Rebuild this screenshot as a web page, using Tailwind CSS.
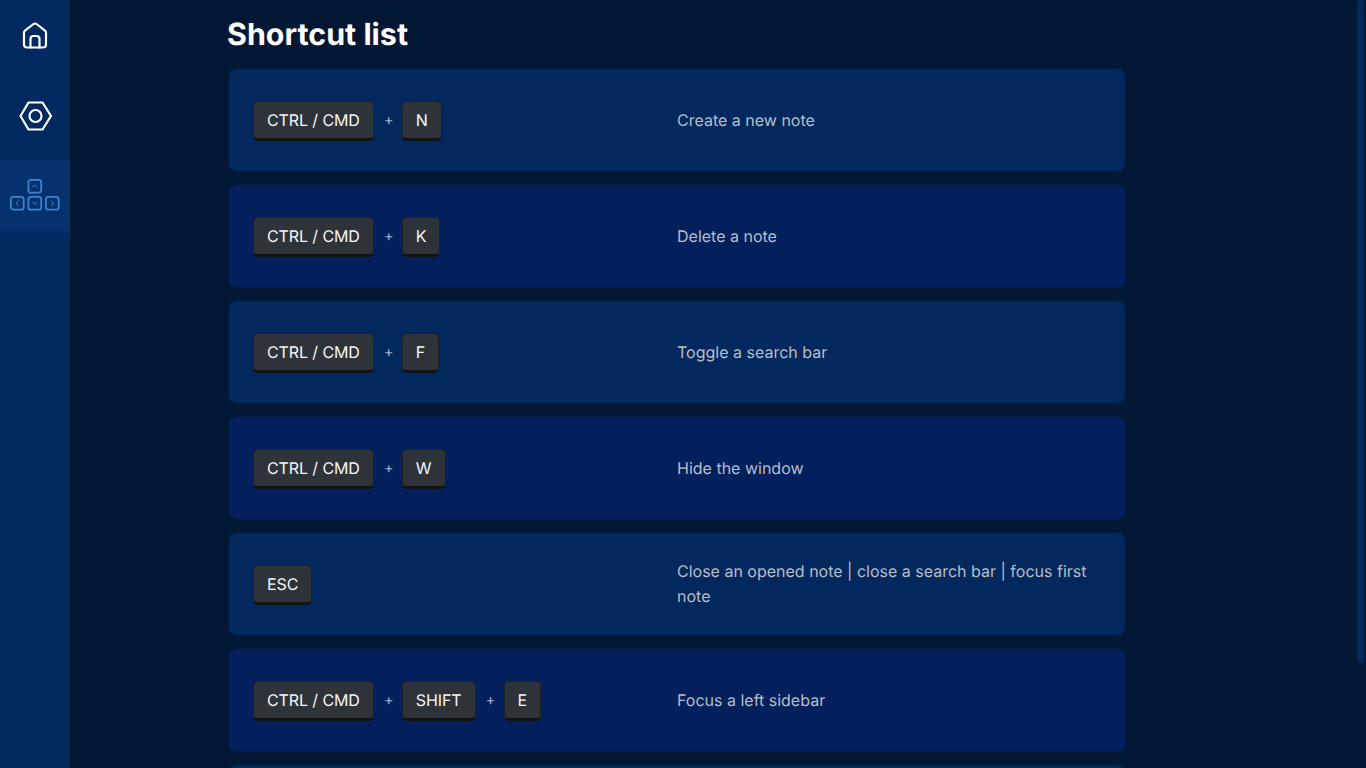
<!DOCTYPE html>
<html lang="en">
<head>
    <meta charset="UTF-8">
    <meta name="viewport" content="width=device-width, initial-scale=1.0">
    <title>Shortcut list</title>
    <script src="https://cdn.jsdelivr.net/npm/@tailwindcss/browser@4"></script>
</head>
<body class="h-screen overflow-hidden bg-[#021733] text-white font-['Inter',sans-serif] antialiased [text-rendering:geometricPrecision]">
    <div class="relative flex h-[768px]">
        <!-- Sidebar -->
        <nav class="flex w-[70px] shrink-0 flex-col items-center bg-[#032a60]">
            <a class="flex h-[71px] w-full items-center justify-center">
                <svg width="26" height="27" viewBox="0 0 26 27" fill="none" stroke="#fff" stroke-width="2.2" stroke-linejoin="round" stroke-linecap="round">
                    <path d="M2 10.5 Q2 9.5 3 8.7 L11.5 2 Q13 1 14.5 2 L23 8.7 Q24 9.5 24 10.5 V22.5 A3 3 0 0 1 21 25.5 H5 A3 3 0 0 1 2 22.5 Z"/>
                    <path d="M8.5 25.5 V17 A3 3 0 0 1 11.5 14 H14.5 A3 3 0 0 1 17.5 17 V25.5"/>
                </svg>
            </a>
            <a class="flex h-[89px] w-full items-center justify-center">
                <svg width="34" height="30" viewBox="0 0 34 30" fill="none" stroke="#fff" stroke-width="2.2" stroke-linejoin="round">
                    <path d="M10.5 1.5 H24.5 L33 15 L24.5 28.5 H10.5 L2.5 15 Z"/>
                    <circle cx="17.5" cy="15" r="6"/>
                </svg>
            </a>
            <a class="flex h-[71px] w-full items-center justify-center bg-[#05326c]">
                <svg width="52" height="33" viewBox="0 0 52 33" fill="none" stroke="#3a83cf" stroke-width="1.8">
                    <rect x="19.4" y="0.9" width="12.8" height="12.8" rx="2.5"/>
                    <rect x="1.9" y="17.9" width="12.8" height="12.8" rx="2.5"/>
                    <rect x="19.4" y="17.9" width="12.8" height="12.8" rx="2.5"/>
                    <rect x="36.9" y="17.9" width="12.8" height="12.8" rx="2.5"/>
                    <path stroke-width="1" d="M23.5 8.5 L25.8 6 L28.1 8.5 M9.8 21.8 L7 24.3 L9.8 26.8 M23.5 22.8 L25.8 25.3 L28.1 22.8 M42 21.8 L44.8 24.3 L42 26.8"/>
                </svg>
            </a>
        </nav>

        <!-- Content -->
        <main class="ml-[157px] w-[899px] shrink-0">
            <h1 class="h-[68px] pt-[15px] text-[30.4px] leading-[40px] font-bold">Shortcut list</h1>
            <div class="flex flex-col gap-[12px] pl-[1px]">
                <div class="flex h-[104px] items-center rounded-lg border border-[#021a3d] bg-[#03285e] pl-[24px]">
                    <div class="flex w-[424px] shrink-0 items-center pt-[2px]">
                        <kbd class="rounded-[5px] border border-[#1d2025] border-b-[3px] border-b-[#111317] bg-[#2e333a] px-[13px] py-[7px] font-['Inter',sans-serif] text-[16px] leading-[22px] tracking-[-0.1px] text-[#f5f6f7]">CTRL / CMD</kbd>
                        <span class="mx-[10px] -mt-[2px] w-[8px] text-center text-[15px] text-[#9fb0c8]">+</span>
                        <kbd class="rounded-[5px] border border-[#1d2025] border-b-[3px] border-b-[#111317] bg-[#2e333a] px-[13px] py-[7px] font-['Inter',sans-serif] text-[16px] leading-[22px] tracking-[-0.1px] text-[#f5f6f7]">N</kbd>
                    </div>
                    <p class="w-[424px] text-[16px] leading-[25px] text-[#b8bdc9]">Create a new note</p>
                </div>
                <div class="flex h-[104px] items-center rounded-lg border border-[#021a3d] bg-[#031f5c] pl-[24px]">
                    <div class="flex w-[424px] shrink-0 items-center pt-[2px]">
                        <kbd class="rounded-[5px] border border-[#1d2025] border-b-[3px] border-b-[#111317] bg-[#2e333a] px-[13px] py-[7px] font-['Inter',sans-serif] text-[16px] leading-[22px] tracking-[-0.1px] text-[#f5f6f7]">CTRL / CMD</kbd>
                        <span class="mx-[10px] -mt-[2px] w-[8px] text-center text-[15px] text-[#9fb0c8]">+</span>
                        <kbd class="rounded-[5px] border border-[#1d2025] border-b-[3px] border-b-[#111317] bg-[#2e333a] px-[13px] py-[7px] font-['Inter',sans-serif] text-[16px] leading-[22px] tracking-[-0.1px] text-[#f5f6f7]">K</kbd>
                    </div>
                    <p class="w-[424px] text-[16px] leading-[25px] text-[#b8bdc9]">Delete a note</p>
                </div>
                <div class="flex h-[104px] items-center rounded-lg border border-[#021a3d] bg-[#03285e] pl-[24px]">
                    <div class="flex w-[424px] shrink-0 items-center pt-[2px]">
                        <kbd class="rounded-[5px] border border-[#1d2025] border-b-[3px] border-b-[#111317] bg-[#2e333a] px-[13px] py-[7px] font-['Inter',sans-serif] text-[16px] leading-[22px] tracking-[-0.1px] text-[#f5f6f7]">CTRL / CMD</kbd>
                        <span class="mx-[10px] -mt-[2px] w-[8px] text-center text-[15px] text-[#9fb0c8]">+</span>
                        <kbd class="rounded-[5px] border border-[#1d2025] border-b-[3px] border-b-[#111317] bg-[#2e333a] px-[13px] py-[7px] font-['Inter',sans-serif] text-[16px] leading-[22px] tracking-[-0.1px] text-[#f5f6f7]">F</kbd>
                    </div>
                    <p class="w-[424px] text-[16px] leading-[25px] text-[#b8bdc9]">Toggle a search bar</p>
                </div>
                <div class="flex h-[104px] items-center rounded-lg border border-[#021a3d] bg-[#031f5c] pl-[24px]">
                    <div class="flex w-[424px] shrink-0 items-center pt-[2px]">
                        <kbd class="rounded-[5px] border border-[#1d2025] border-b-[3px] border-b-[#111317] bg-[#2e333a] px-[13px] py-[7px] font-['Inter',sans-serif] text-[16px] leading-[22px] tracking-[-0.1px] text-[#f5f6f7]">CTRL / CMD</kbd>
                        <span class="mx-[10px] -mt-[2px] w-[8px] text-center text-[15px] text-[#9fb0c8]">+</span>
                        <kbd class="rounded-[5px] border border-[#1d2025] border-b-[3px] border-b-[#111317] bg-[#2e333a] px-[13px] py-[7px] font-['Inter',sans-serif] text-[16px] leading-[22px] tracking-[-0.1px] text-[#f5f6f7]">W</kbd>
                    </div>
                    <p class="w-[424px] text-[16px] leading-[25px] text-[#b8bdc9]">Hide the window</p>
                </div>
                <div class="flex h-[104px] items-center rounded-lg border border-[#021a3d] bg-[#03285e] pl-[24px]">
                    <div class="flex w-[424px] shrink-0 items-center pt-[2px]">
                        <kbd class="rounded-[5px] border border-[#1d2025] border-b-[3px] border-b-[#111317] bg-[#2e333a] px-[13px] py-[7px] font-['Inter',sans-serif] text-[16px] leading-[22px] tracking-[-0.1px] text-[#f5f6f7]">ESC</kbd>
                    </div>
                    <p class="w-[424px] text-[16px] leading-[25px] text-[#b8bdc9]">Close an opened note | close a search bar | focus first note</p>
                </div>
                <div class="flex h-[104px] items-center rounded-lg border border-[#021a3d] bg-[#031f5c] pl-[24px]">
                    <div class="flex w-[424px] shrink-0 items-center pt-[2px]">
                        <kbd class="rounded-[5px] border border-[#1d2025] border-b-[3px] border-b-[#111317] bg-[#2e333a] px-[13px] py-[7px] font-['Inter',sans-serif] text-[16px] leading-[22px] tracking-[-0.1px] text-[#f5f6f7]">CTRL / CMD</kbd>
                        <span class="mx-[10px] -mt-[2px] w-[8px] text-center text-[15px] text-[#9fb0c8]">+</span>
                        <kbd class="rounded-[5px] border border-[#1d2025] border-b-[3px] border-b-[#111317] bg-[#2e333a] px-[13px] py-[7px] font-['Inter',sans-serif] text-[16px] leading-[22px] tracking-[-0.1px] text-[#f5f6f7]">SHIFT</kbd>
                        <span class="mx-[10px] -mt-[2px] w-[8px] text-center text-[15px] text-[#9fb0c8]">+</span>
                        <kbd class="rounded-[5px] border border-[#1d2025] border-b-[3px] border-b-[#111317] bg-[#2e333a] px-[13px] py-[7px] font-['Inter',sans-serif] text-[16px] leading-[22px] tracking-[-0.1px] text-[#f5f6f7]">E</kbd>
                    </div>
                    <p class="w-[424px] text-[16px] leading-[25px] text-[#b8bdc9]">Focus a left sidebar</p>
                </div>
                <div class="h-[104px] rounded-lg border border-[#021a3d] bg-[#03285e]"></div>
            </div>
        </main>

        <!-- Scrollbar thumb -->
        <div class="absolute top-0 right-[2px] h-[663px] w-[7px] rounded-full bg-[#03285d]"></div>
    </div>
</body>
</html>
